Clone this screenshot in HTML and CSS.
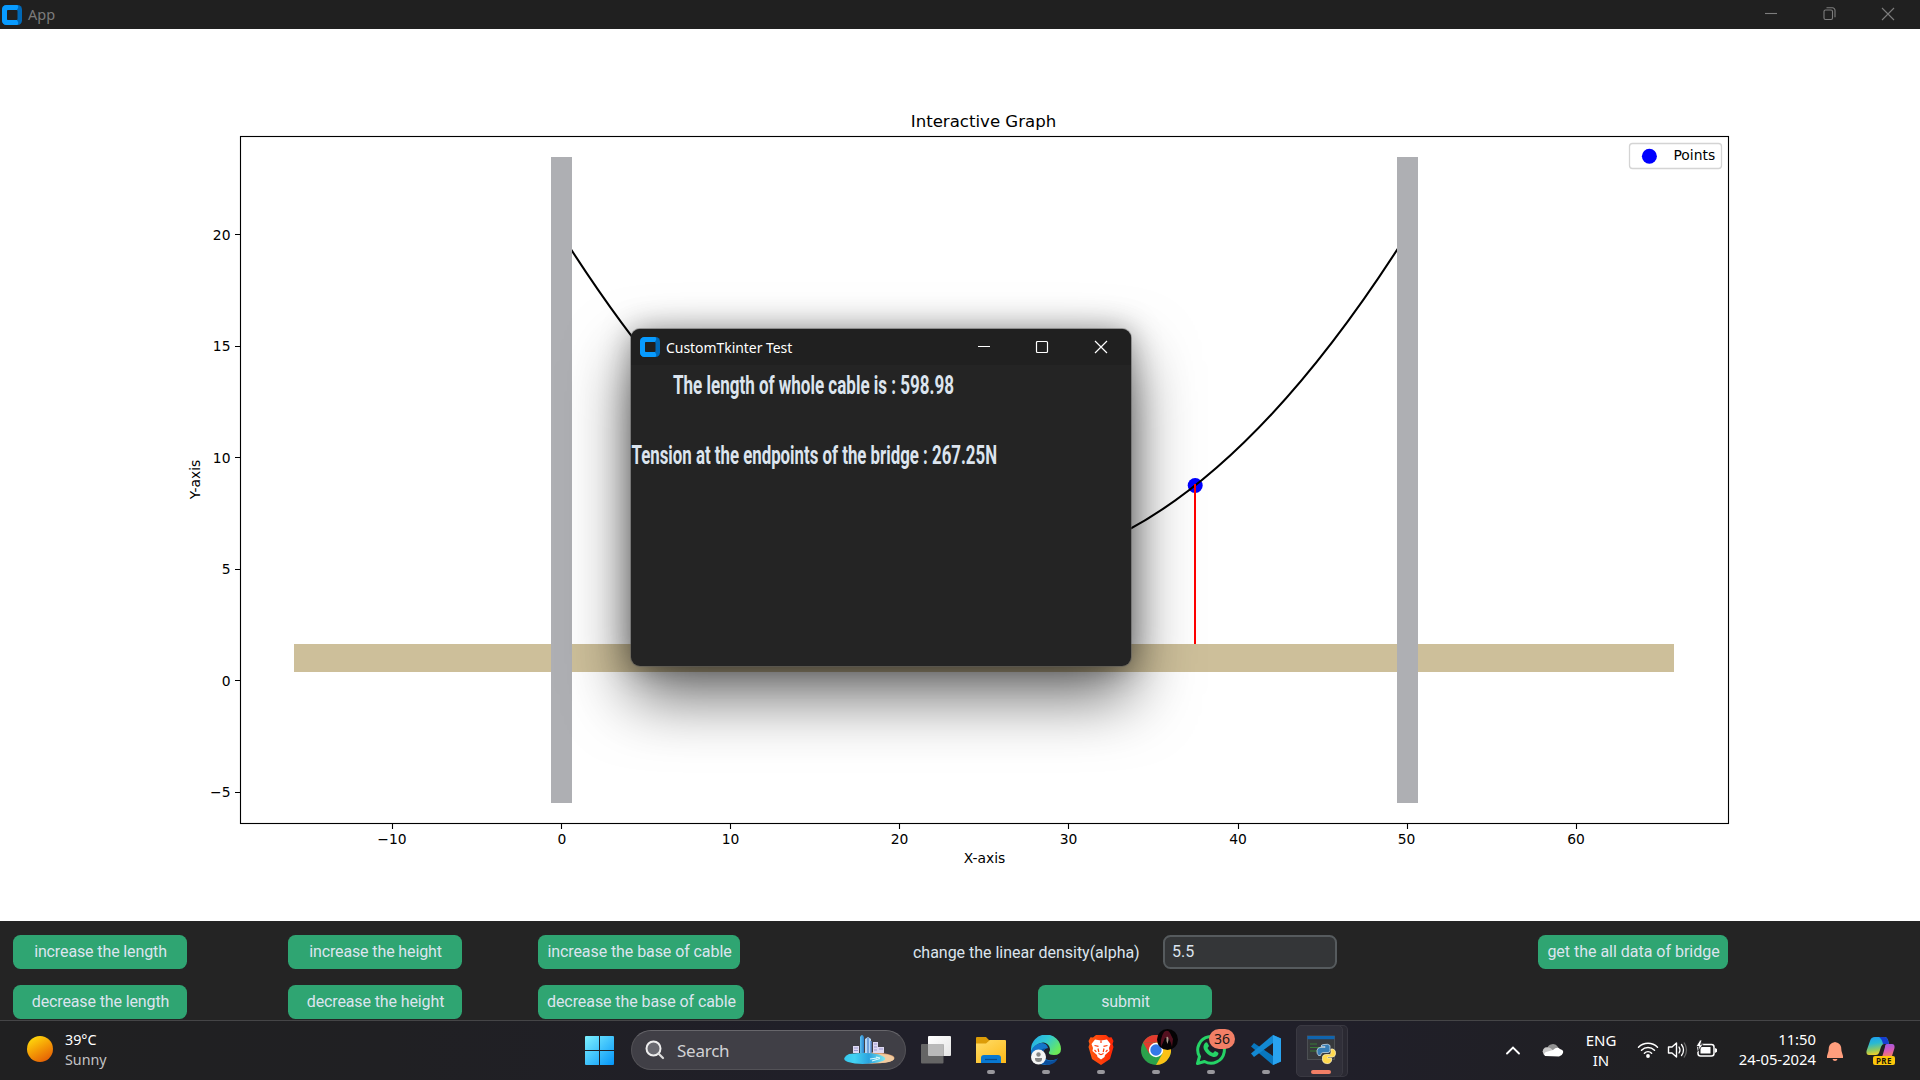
FILE: index.html
```html
<!DOCTYPE html>
<html lang="en">
<head>
<meta charset="utf-8">
<title>App</title>
<link rel="stylesheet" href="styles.css">
</head>
<body>
<svg class="defs" aria-hidden="true">
  <symbol id="logo" viewBox="0 0 20 20">
    <rect width="20" height="20" rx="4.5" fill="#0069b8"/>
    <path d="M4.5 0H14.500a1.500 2 0 0 1 1.500 3l-1.200 2.200H5V14.800H14.800l1.200 2.200a1.500 2 0 0 1-1.500 3H4.500A4.500 4.500 0 0 1 0 15.500V4.500A4.500 4.500 0 0 1 4.500 0Z" fill="#089bff"/>
    <rect x="5" y="5" width="10.500" height="10" rx="1" fill="#202020"/>
  </symbol>
</svg>
<div class="screen">
  <header class="titlebar">
    <svg class="logo"><use href="#logo"/></svg>
    <span class="title">App</span>
    <div class="winbtns">
      <svg width="14" height="16" viewBox="0 0 14 16"><path d="M1 7.500h12"/></svg>
      <svg width="14" height="16" viewBox="0 0 14 16"><rect x="1" y="4" width="8.500" height="9.500" rx="1.500"/><path d="M3.500 1.800h6a2.500 2.500 0 0 1 2.500 2.500v7"/></svg>
      <svg width="14" height="16" viewBox="0 0 14 16"><path d="M1 2l12 12M13 2L1 14"/></svg>
    </div>
  </header>

  <main class="plot">
    <svg width="1920" height="892" viewBox="0 29 1920 892">
      <rect class="deck" x="294" y="644" width="1380" height="28"/>
      <circle cx="1195.200" cy="485.500" r="7.500" fill="#00f"/>
      <path class="cable" d="M561.200 234Q984.200 903.500 1407.200 234"/>
      <path d="M1195 484V644" stroke="#f00" stroke-width="2"/>
      <rect class="pillar" x="551" y="157" width="21" height="646"/>
      <rect class="pillar" x="1397" y="157" width="21" height="646"/>
      <rect class="frame" x="240.500" y="136.500" width="1488" height="687"/>
      <path class="ticks" d="M392.500 824v5M561.500 824v5M730.500 824v5M899.500 824v5M1068.500 824v5M1238.500 824v5M1407.500 824v5M1576.500 824v5M240 234.500h-5M240 346.500h-5M240 457.500h-5M240 569.500h-5M240 680.500h-5M240 792.500h-5"/>
      <g class="label middle">
        <text x="392" y="844">−10</text><text x="562" y="844">0</text><text x="730.500" y="844">10</text><text x="899.500" y="844">20</text><text x="1068.500" y="844">30</text><text x="1238" y="844">40</text><text x="1406.500" y="844">50</text><text x="1576" y="844">60</text>
        <text x="984.500" y="863">X-axis</text>
        <text transform="translate(200 479.500)rotate(-90)">Y-axis</text>
        <text class="heading" x="983.500" y="127" textLength="145.500" lengthAdjust="spacingAndGlyphs">Interactive Graph</text>
      </g>
      <g class="label end">
        <text x="230.500" y="240">20</text><text x="230.500" y="351">15</text><text x="230.500" y="463">10</text><text x="230.500" y="574">5</text><text x="230.500" y="686">0</text><text x="230.500" y="797">−5</text>
      </g>
      <rect x="1629.500" y="143.500" width="92" height="25" rx="3" fill="#fff" stroke="#d4d4d4" stroke-width="1.300"/>
      <circle cx="1649.400" cy="156.300" r="7.500" fill="#00f"/>
      <text class="label" x="1673.500" y="160">Points</text>
    </svg>
  </main>

  <section class="controls">
    <div class="col c1"><button>increase the length</button><button>decrease the length</button></div>
    <div class="col c2"><button>increase the height</button><button>decrease the height</button></div>
    <div class="col c3"><button>increase the base of cable</button><button>decrease the base of cable</button></div>
    <div class="col c4">
      <div class="field"><label for="alpha">change the linear density(alpha)</label><input id="alpha" value="5.5"></div>
      <button>submit</button>
    </div>
    <div class="col c5"><button>get the all data of bridge</button></div>
  </section>

  <footer class="taskbar">
    <div class="weather">
      <i class="sun"></i>
      <div><div>39°C</div><div class="dim">Sunny</div></div>
    </div>
    <div class="apps">
      <svg class="start" width="30" height="30" viewBox="0 0 30 30">
        <defs><linearGradient id="win" gradientUnits="userSpaceOnUse" x1="0" y1="0" x2="30" y2="30"><stop stop-color="#7df1ff"/><stop offset="1" stop-color="#0092f8"/></linearGradient></defs>
        <path fill="url(#win)" d="M1 0h13v14H0V1a1 1 0 0 1 1-1ZM15 0h13a1 1 0 0 1 1 1v13H15ZM0 15h14v14H1a1 1 0 0 1-1-1ZM15 15h14v13a1 1 0 0 1-1 1H15Z"/>
      </svg>
      <div class="search">
        <svg width="20" height="20" viewBox="0 0 20 20"><circle cx="8.500" cy="8.500" r="7" fill="#696970" stroke="#eee" stroke-width="2"/><path d="M13.500 13.500l4.500 4.500" stroke="#ddd" stroke-width="2.200" stroke-linecap="round"/></svg>
        <span>Search</span>
        <svg class="city" width="52" height="30" viewBox="0 0 52 30">
          <defs><linearGradient id="sea"><stop stop-color="#35c8ee"/><stop offset=".25" stop-color="#43d2f2"/><stop offset=".6" stop-color="#2aa3df"/><stop offset="1" stop-color="#7be8f0"/></linearGradient><linearGradient id="tower" x2="1"><stop stop-color="#5cc4f4"/><stop offset="1" stop-color="#297fc8"/></linearGradient></defs>
          <ellipse cx="29" cy="23" rx="22.500" ry="5.800" fill="#d99f70"/>
          <ellipse cx="37" cy="23.500" rx="14" ry="4.500" fill="#f1cba0"/>
          <path d="M10 11h6v7h-6zM30 7h5v11h-5zM35 12h6v6h-6z" fill="#ded9f2"/>
          <path d="M11 13h4M11 15.500h4M36 14h4M31 9h3M31 12h3M31 15h3" stroke="#9b97ce"/>
          <path d="M22 4l3-2 3 2v14h-6z" fill="#b6d6f5"/><path d="M25 3v15M28 6v12" stroke="#5c8ed0" stroke-width="1.500"/>
          <path d="M17 2q2-4 4 0v16h-4z" fill="url(#tower)"/>
          <path d="M6 19q18-2 30 .5q13 5-1 8q-18 3-30-.5q-8-3 1-8Z" fill="url(#sea)"/>
          <path d="M27 24l7-1M29 26l8-2.500M33 22l4 1" stroke="#d7faff" stroke-width="1.200"/>
        </svg>
      </div>
      <div class="app"><svg width="30" height="30" viewBox="0 0 30 30"><defs><linearGradient id="tv" x2="1" y2="1"><stop stop-color="#fff"/><stop offset="1" stop-color="#e5e5e5"/></linearGradient></defs><rect x="7" y="1" width="23" height="20" rx="1" fill="url(#tv)"/><rect y="9" width="22.500" height="19.500" rx="1" fill="#656565"/><path d="M7 9h15.500v12H8a1 1 0 0 1-1-1z" fill="#b9b9b9"/></svg></div>
      <div class="app run"><svg width="30" height="30" viewBox="0 0 30 30"><defs><linearGradient id="fold" x2=".8" y2="1"><stop stop-color="#ffdd69"/><stop offset="1" stop-color="#fdbb1d"/></linearGradient></defs><path d="M0 3q0-1 1-1h9l3 3h10v8H0Z" fill="#dc9c08"/><path d="M0 8.500h10l4-3.500h15q1 0 1 1v22H0Z" fill="url(#fold)"/><path d="M5 28v-5q0-3 3-3h14q3 0 3 3v5Z" fill="#0878d1"/><path d="M9 24.500h12" stroke="#064b8d" stroke-width="1.200"/></svg></div>
      <div class="app run"><svg width="30" height="30" viewBox="0 0 30 30"><defs><linearGradient id="edg" x2="1" y2=".6"><stop stop-color="#22a6e9"/><stop offset=".5" stop-color="#31c8d3"/><stop offset="1" stop-color="#6bea58"/></linearGradient></defs><path d="M0 15A15 15 0 0 1 30 14q0 6-7 6-6 0-5-3 2-2 0-6-4-6-11-2-5 3-7 8Z" fill="url(#edg)"/><path d="M0 16Q3 9 10 8q6 0 7 5-6 1-5 7 3 8 14 4-4 6-12 6Q1 29 0 16Z" fill="#1476ca"/><path d="M14 13q-5 6 0 11 6 5 13-1-3 7-11 7-8-1-9-9 1-6 7-8Z" fill="#0a4e9c"/><circle cx="7.500" cy="22" r="7.500" fill="#f4f4f4"/><circle cx="7.500" cy="19.500" r="2.200" fill="#858585"/><path d="M4 23h7v1q0 3-3.500 3T4 24Z" fill="#858585"/></svg></div>
      <div class="app run"><svg width="26" height="30" viewBox="0 0 26 30"><defs><linearGradient id="brv" x2="1"><stop stop-color="#ff5b12"/><stop offset="1" stop-color="#ff2505"/></linearGradient></defs><path d="M8 0h10l3 2.500 2.500-.3L25.500 6l-1 3 1 3-3.500 12-9 6-9-6L.5 12l1-3-1-3L2.500 2.200 5 2.500Z" fill="url(#brv)"/><path d="M7 4.500l6 1 6-1 3.500 4.500-1.500 4 .5 3-4.500 4-.5 2-3.500 2.500-3.500-2.500-.5-2L4.500 16l.5-3-1.500-4Z" fill="#fff"/><path d="M6.500 10.500l4 .8M19.500 10.500l-4 .8M10 13.500l.8 3.500M16 13.500l-.8 3.500M10.500 18.500l2.500 1.200 2.500-1.200M6.500 15l1.800 1.800M19.500 15l-1.800 1.800M13 5.500v2.500" stroke="#ff3b0b" stroke-width="1.200" fill="none"/></svg></div>
      <div class="app run"><svg width="30" height="30" viewBox="0 0 30 30"><circle cx="15" cy="15" r="15" fill="#2ba24c"/><path d="M2 7.500A15 15 0 0 1 28 7.500H15Z" fill="#e33b2e"/><path d="M2 7.500L8.500 19 15 7.500Z" fill="#e33b2e"/><path d="M28 7.500A15 15 0 0 1 15 30L21.500 18.500 15 7.500Z" fill="#fbc116"/><circle cx="15" cy="15" r="7.200" fill="#fff"/><circle cx="15" cy="15" r="5.700" fill="#3379e8"/></svg>
        <svg class="avatar" width="21" height="21" viewBox="0 0 21 21"><circle cx="10.500" cy="10.500" r="10.500" fill="#050304"/><path d="M7 3q4-3 6 1l3 6-1 8q-1-5-3-8l-4-1-4 9q-1-9 3-15Z" fill="#54101f"/><path d="M9.500 8q2-1 2 3l-1 4-1-3Z" fill="#a89c8e"/></svg></div>
      <div class="app run"><svg width="30" height="30" viewBox="0 0 30 30"><path d="M1.500 28.500l2-7A13.300 13.300 0 1 1 8.500 26.500Z" fill="none" stroke="#25d366" stroke-width="3" stroke-linejoin="round"/><path d="M9 8q2-2 3 1l1 2-1.500 2q2 4 5.500 5l2-2 3 1.500q1 .8 0 2.500-2 3-6 1.500-5-1.500-8-7Q6.500 11 9 8Z" fill="#25d366"/></svg><b class="count">36</b></div>
      <div class="app run"><svg width="30" height="30" viewBox="0 0 30 30"><path d="M22 0l8 3.500v23L22 30 0 11.500 3 8l19 13Z" fill="#0877bf"/><path d="M22 8L3 22 0 18.500 22 0Z" fill="#1389d3"/><path d="M22 0l8 3.500v23L22 30Z" fill="#29a3f0"/></svg></div>
      <div class="app run active"><svg width="30" height="30" viewBox="0 0 30 30"><rect x=".5" y="1" width="27" height="23.500" fill="#37393c" stroke="#54575b" stroke-width=".8"/><rect x=".5" y="1" width="27" height="3.200" fill="#1064ae"/><path d="M3 9h7M3 12.500h11M3 16h8" stroke="#397b36"/><path d="M17 9.500q4-1 6 1v5q0 2-2 2h-5q-2 0-2.500 3h-2q-2-2-1.500-5 .5-3 3-3h5v-1h-4q0-2 3-2Z" fill="#377db5" stroke="#d7e8f4" stroke-width=".7"/><path d="M24 14h2q3 1 2.500 5-.5 3-3 3h-5v1h4v3q-2 4-7 2-2-1-2-3v-3q0-2 3-2.500h4q2 0 1.500-5.500Z" fill="#ffd94e" stroke="#fff4cb" stroke-width=".7"/></svg></div>
    </div>
    <div class="tray">
      <svg class="t-chev" width="16" height="10" viewBox="0 0 16 10"><path d="M2 8.500l6-6 6 6" fill="none" stroke="#fff" stroke-width="1.900" stroke-linecap="round"/></svg>
      <svg class="t-cloud" width="22" height="14" viewBox="0 0 22 14"><path d="M5 6a6 6 0 0 1 11-2l2 4-9 5Z" fill="#919191"/><path d="M2 12Q-1 7 3 4.500q5-1 8 3l-6 5Z" fill="#c9c9c9"/><path d="M3 13q-2-3 1-4l7-2q4-4 7-1 4 1 3 4t-4 3.500Z" fill="#fff"/></svg>
      <div class="lang"><div>ENG</div><div>IN</div></div>
      <svg class="t-wifi" width="22" height="18" viewBox="0 0 22 18"><path d="M1.500 6.200a13.500 13.500 0 0 1 19 0M4.500 9.200a9.300 9.300 0 0 1 13 0M7.400 12.200a5.200 5.200 0 0 1 7.200 0" fill="none" stroke="#fff" stroke-width="1.500" stroke-linecap="round"/><circle cx="11" cy="15" r="1.900" fill="#fff"/></svg>
      <svg class="t-vol" width="22" height="18" viewBox="0 0 22 18"><path d="M1.500 6h3.500l4.500-4v14l-4.500-4H1.500Z" fill="none" stroke="#fff" stroke-width="1.400" stroke-linejoin="round"/><path d="M12 6q2 3 0 6M14.500 3.500q4 5.500 0 11" fill="none" stroke="#fff" stroke-width="1.300" stroke-linecap="round"/><path d="M17 1.500q5 7.500 0 15" fill="none" stroke="#666" stroke-width="1.300"/></svg>
      <svg class="t-bat" width="22" height="18" viewBox="0 0 22 18"><rect x="2" y="4.500" width="16" height="11.500" rx="2.500" fill="none" stroke="#fff" stroke-width="1.500"/><rect x="4.500" y="7" width="10" height="6.500" fill="#fff"/><path d="M19 8v5l2-1.300V9Z" fill="#fff"/><path d="M4 0L0 6.500h3L1.500 11.500 7 4.800H4.500L6 0Z" fill="#fff" stroke="#202022" stroke-width=".8"/></svg>
      <div class="clock"><div>11:50</div><div>24-05-2024</div></div>
      <svg class="t-bell" width="18" height="21" viewBox="0 0 18 21"><path d="M9 1q7 1 6.500 9l1.500 5v2H1v-2l1.500-5Q2 2 9 1ZM6.500 18h5q-.5 2-2.500 2t-2.500-2Z" fill="#ff9e7d"/></svg>
      <div class="copilot">
        <svg width="30" height="29" viewBox="0 0 30 29"><defs><linearGradient id="cpa" x2=".2" y2="1"><stop stop-color="#1c9bf2"/><stop offset=".4" stop-color="#28b9d2"/><stop offset=".75" stop-color="#8cc863"/><stop offset="1" stop-color="#e9d02d"/></linearGradient><linearGradient id="cpb" x2=".2" y2="1"><stop stop-color="#9558ec"/><stop offset=".6" stop-color="#dd5bb0"/><stop offset="1" stop-color="#f6835a"/></linearGradient></defs><path d="M9 1h10q2 0 3 3l1 4h-5q-2 0-3 3l-2 6q-1 2-3 2H3q-3 0-2.500-4L4 5Q5 1 9 1Z" fill="url(#cpa)"/><path d="M13 1h6q2 0 3 3l1 4h-6q-1-5-4-7Z" fill="#173fd0"/><path d="M21 8h5q3 0 2.500 4L26 20q-1 2-3 2h-9q2 0 3-4l2-7q0-3 2-3Z" fill="url(#cpb)"/></svg>
        <b class="pre">PRE</b>
      </div>
    </div>
  </footer>

  <div class="dialog">
    <div class="dialog-bar">
      <svg class="logo"><use href="#logo"/></svg>
      <span>CustomTkinter Test</span>
      <svg class="d-min" width="14" height="14" viewBox="0 0 14 14"><path d="M1 6.500h12"/></svg>
      <svg class="d-max" width="14" height="14" viewBox="0 0 14 14"><rect x="1.500" y="1.500" width="11" height="11" rx="1"/></svg>
      <svg class="d-close" width="14" height="14" viewBox="0 0 14 14"><path d="M1 1l12 12M13 1L1 13"/></svg>
    </div>
    <svg class="readout" width="500" height="120" viewBox="0 0 500 120">
      <text x="42" y="29" textLength="281" lengthAdjust="spacingAndGlyphs">The length of whole cable is : 598.98</text>
      <text x="0.500" y="99" textLength="365.500" lengthAdjust="spacingAndGlyphs">Tension at the endpoints of the bridge : 267.25N</text>
    </svg>
  </div>
</div>
</body>
</html>
```
FILE: styles.css
```css
* { box-sizing: border-box; }
body { margin: 0; background: #fff; overflow: hidden; }
svg { display: block; flex: none; }
.defs { position: absolute; width: 0; height: 0; }
.screen { position: relative; width: 1920px; height: 1080px; display: flex; flex-direction: column; font-family: "Noto Sans", sans-serif; }

.titlebar { height: 29px; background: #202020; display: flex; align-items: center; padding: 0 25px 0 2px; }
.logo { width: 20px; height: 20px; }
.title { margin-left: 6px; font-size: 14.500px; color: #7b7b7b; line-height: 29px; }
.winbtns { margin: -1px 0 0 auto; display: flex; gap: 44.500px; fill: none; stroke: #7d7d7d; stroke-width: 1.100; }

.plot { height: 892px; background: #fff; }
.cable { fill: none; stroke: #000; stroke-width: 2.080; }
.deck { fill: #cdbf9a; }
.pillar { fill: #aeafb3; }
.frame { fill: none; stroke: #000; stroke-width: 1.110; }
.ticks { stroke: #000; stroke-width: 1.110; }
.label { font: 13.890px "DejaVu Sans", sans-serif; fill: #000; }
.middle { text-anchor: middle; }
.end { text-anchor: end; }
.heading { font-size: 16.670px; }

.controls { height: 99px; background: #242424; display: flex; padding: 14px 0 0 13px; font-family: Roboto, sans-serif; font-size: 16px; letter-spacing: -.02px; color: #dce4ee; }
.col { display: flex; flex-direction: column; align-items: flex-start; gap: 16px; }
.c1 { width: 275px; }
.c2 { width: 250px; }
.c3 { width: 375px; }
.c4 { width: 424px; align-items: center; margin-right: 201px; }
.col button { height: 34px; min-width: 174px; padding: 0 8px 1px 9px; border: 0; border-radius: 7.500px; background: #2fa572; color: #dce4ee; font: inherit; letter-spacing: -.08px; white-space: nowrap; }
.c1 button, .c2 button { letter-spacing: -.12px; }
.c3 button:first-child { width: 202px; }
.c3 button:last-child { width: 206px; }
.c5 button { width: 190px; letter-spacing: -.02px; }
.field { width: 100%; height: 34px; display: flex; justify-content: space-between; }
.field label { line-height: 35px; white-space: nowrap; }
.field input { width: 174px; height: 34px; padding: 0 7px 2px; border: 2px solid #565b5e; border-radius: 7.500px; background: #343638; color: #dce4ee; font: inherit; outline: 0; }

.taskbar { height: 60px; border-top: 1px solid #454547; background: linear-gradient(90deg, #202021, #202023 20%, #201f29 45%, #201f29 70%, #202021 90%); display: flex; color: #fff; font-size: 15px; line-height: 20px; }
.weather { width: 585px; display: flex; gap: 12px; padding: 9px 0 0 27px; }
.sun { width: 26px; height: 26px; margin-top: 6px; border-radius: 50%; background: linear-gradient(150deg, #ffdc0c 8%, #f49a05 50%, #e04f06); }
.weather div { font-size: 14.300px; }
.weather .dim { color: #c4c4c6; }

.apps { display: flex; width: 765px; }
.start { margin: 15px 16px 0 0; }
.search { width: 275px; height: 40px; margin: 9px 2px 0 0; padding: 0 10px 0 13px; border: 1px solid #535257; border-top-color: #67666b; border-radius: 20px; background: #403f46; display: flex; align-items: center; color: #d2d2d5; font-size: 17px; }
.search span { margin: 1px 0 0 12px; letter-spacing: -.25px; }
.city { margin: 0 0 0 auto; }
.app { position: relative; width: 55px; height: 59px; flex: none; display: flex; justify-content: center; padding-top: 14px; }
.app.run::after { content: ""; position: absolute; left: 24px; top: 49px; width: 8px; height: 4px; border-radius: 2px; background: #98979c; }
.avatar { position: absolute; left: 29px; top: 8px; }
.count { position: absolute; left: 26px; top: 8px; width: 26px; height: 20px; border-radius: 10px; background: #f27f66; color: #161616; font-weight: 400; font-size: 14px; line-height: 20px; text-align: center; }
.app.active::before { content: ""; position: absolute; left: 3px; top: 4px; width: 45px; height: 50px; border: 1px solid #3a3942; border-radius: 5px; background: #302f39; box-shadow: 5px 0 0 -1px #2a2932, 5px 0 0 #393841; }
.app.active svg { position: relative; left: 1px; }
.app.active.run::after { left: 18px; width: 20px; background: #f27f66; }

.tray { display: flex; flex: 1; }
.t-chev { margin: 24px 0 0 155px; }
.t-cloud { margin: 22px 0 0 21px; }
.lang { width: 40px; margin: 9px 0 0 17px; text-align: center; }
.t-wifi { margin: 20px 0 0 16px; }
.t-vol { margin: 20px 0 0 8px; }
.t-bat { margin: 19px 0 0 7px; }
.clock { width: 92px; margin: 8px 0 0 6px; text-align: right; font-size: 14.800px; white-space: nowrap; display: flex; flex-direction: column; align-items: flex-end; }
.t-bell { margin: 20px 0 0 10px; }
.copilot { position: relative; margin: 15px 0 0 22px; }
.pre { position: absolute; left: 7px; top: 20px; width: 22px; height: 9px; border-radius: 2px; background: #fcc70b; color: #1a1608; font-size: 8px; line-height: 9px; text-align: center; letter-spacing: .5px; }

.dialog { position: absolute; left: 631px; top: 329px; width: 500px; height: 337px; border-radius: 9px; overflow: hidden; background: #242424; box-shadow: 0 0 0 1px rgba(90, 90, 90, .5), 0 30px 64px rgba(0, 0, 0, .6), 0 0 30px rgba(0, 0, 0, .35); }
.dialog-bar { height: 36px; display: flex; align-items: center; padding: 0 23px 0 9px; background: #202020; color: #fff; font-size: 14px; fill: none; stroke-width: 1.200; }
.dialog-bar span { margin: 0 0 0 6px; letter-spacing: -.05px; }
.dialog-bar svg:not(.logo) { stroke: #fff; }
.d-min { margin-left: auto; }
.d-max { margin-left: 44px; }
.d-close { margin-left: 45px; }
.readout { overflow: visible; }
.readout text { font: 700 26px "Liberation Sans Narrow", Roboto, sans-serif; fill: #dce4ee; }
```
